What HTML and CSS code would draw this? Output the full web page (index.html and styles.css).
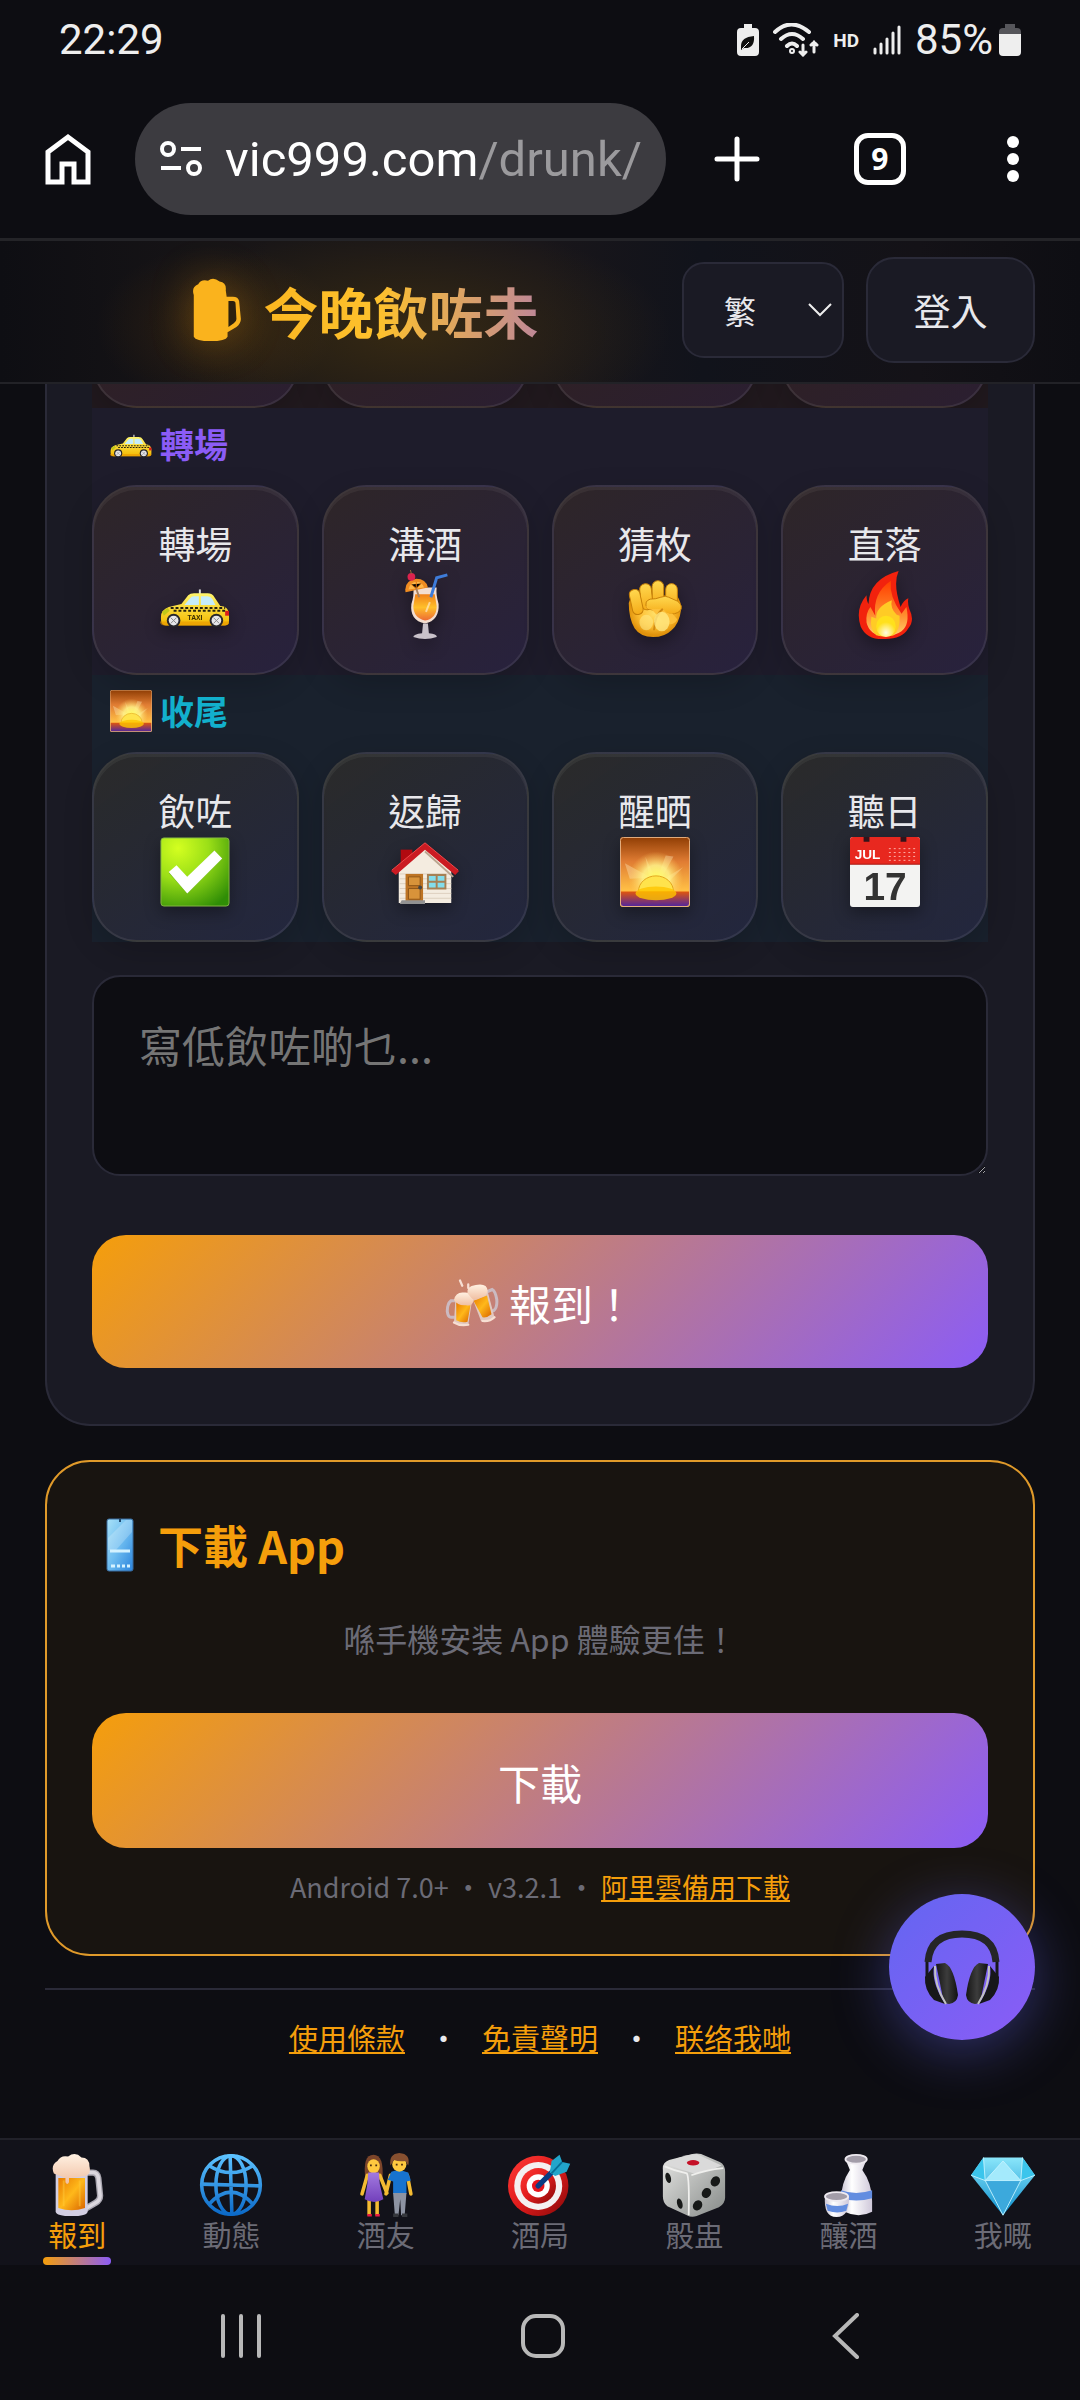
FILE: index.html
```
<!DOCTYPE html>
<html lang="zh-Hant">
<head>
    <meta charset="UTF-8">
    <meta name="viewport" content="width=device-width, initial-scale=1">
    <title>今晚飲咗未</title>
    <link rel="stylesheet" href="styles.css">
</head>
<body>
    <svg class="sprite" aria-hidden="true">
        <defs>
            <linearGradient id="g-beer" x1="0" x2="1" y1="0" y2="1"><stop offset="0" stop-color="#e87a00"/><stop offset=".5" stop-color="#ffb81a"/><stop offset="1" stop-color="#d96400"/></linearGradient>
            <linearGradient id="g-foam" x2="0" y2="1"><stop offset="0" stop-color="#fff1e2"/><stop offset="1" stop-color="#f0bfa2"/></linearGradient>
            <linearGradient id="g-taxi" x2="0" y2="1"><stop offset="0" stop-color="#fff56b"/><stop offset="1" stop-color="#f3b800"/></linearGradient>
            <linearGradient id="g-drink" x2="0" y2="1"><stop offset="0" stop-color="#f08018"/><stop offset=".5" stop-color="#ffc02a"/><stop offset="1" stop-color="#ed6a35"/></linearGradient>
            <radialGradient id="g-skin" cx=".5" cy=".45"><stop offset="0" stop-color="#ffe06a"/><stop offset=".6" stop-color="#fdbe32"/><stop offset="1" stop-color="#e0920c"/></radialGradient>
            <linearGradient id="g-finger" x2="0" y2="1"><stop offset="0" stop-color="#ffd84f"/><stop offset="1" stop-color="#f5ab18"/></linearGradient>
            <linearGradient id="g-fire" x2="0" y2="1"><stop offset="0" stop-color="#ff3d00"/><stop offset=".6" stop-color="#ff8a2c"/><stop offset="1" stop-color="#ffd06c"/></linearGradient>
            <radialGradient id="g-core" cy=".8"><stop offset="0" stop-color="#fffbe0"/><stop offset="1" stop-color="#ffe01c"/></radialGradient>
            <radialGradient id="g-green" cx=".25" cy=".15" r="1"><stop offset="0" stop-color="#d4ff20"/><stop offset=".45" stop-color="#9bdf17"/><stop offset="1" stop-color="#2f8d06"/></radialGradient>
            <linearGradient id="g-sky" x2="0" y2="1"><stop offset="0" stop-color="#8f3d04"/><stop offset=".35" stop-color="#e07c33"/><stop offset=".75" stop-color="#ffbe45"/></linearGradient>
            <radialGradient id="g-glow"><stop offset="0" stop-color="#ffff60"/><stop offset=".5" stop-color="#fff48a" stop-opacity=".85"/><stop offset="1" stop-color="#ffd060" stop-opacity="0"/></radialGradient>
            <linearGradient id="g-sea" x2="0" y2="1"><stop offset="0" stop-color="#e2560c"/><stop offset="1" stop-color="#54269a"/></linearGradient>
            <linearGradient id="g-phone" x2="1" y2="1"><stop offset="0" stop-color="#a9e2f8"/><stop offset=".5" stop-color="#6dbcf0"/><stop offset="1" stop-color="#2a83dc"/></linearGradient>
            <linearGradient id="g-globe" x2="0" y2="1"><stop offset="0" stop-color="#5cc2ff"/><stop offset="1" stop-color="#0c6ac8"/></linearGradient>
            <linearGradient id="g-target" x2="1" y2="1"><stop offset="0" stop-color="#ff3a36"/><stop offset=".5" stop-color="#e01c1c"/><stop offset="1" stop-color="#860808"/></linearGradient>
            <linearGradient id="g-die" x2="1" y2="1"><stop offset="0" stop-color="#e6e6e4"/><stop offset="1" stop-color="#868a88"/></linearGradient>
            <linearGradient id="g-china"><stop offset="0" stop-color="#c9c4d4"/><stop offset=".35" stop-color="#fff"/><stop offset="1" stop-color="#cfc8da"/></linearGradient>
            <linearGradient id="g-gem" x2="0" y2="1"><stop offset="0" stop-color="#8ae6fa"/><stop offset="1" stop-color="#0a8ccc"/></linearGradient>
            <linearGradient id="g-cup" x2="1"><stop offset="0" stop-color="#161616"/><stop offset=".5" stop-color="#3c3c3c"/><stop offset="1" stop-color="#111"/></linearGradient>
            <linearGradient id="g-dress" x2="0" y2="1"><stop offset="0" stop-color="#a37ae0"/><stop offset="1" stop-color="#7240bb"/></linearGradient>
        </defs>

        <symbol id="i-mug" viewBox="0 0 72 72">
            <path d="M44 22h10q5 0 6 6l2 20q0 5-5 8l-12 7" fill="none" stroke="#a9a6b0" stroke-width="7" stroke-linejoin="round"/>
            <path d="M44 22h10q5 0 6 6l2 20q0 5-5 8l-12 7" fill="none" stroke="#dcd8df" stroke-width="4" stroke-linejoin="round"/>
            <path d="M12 22h36v44q-1 5-18 5t-18-5z" fill="#d2cee2"/>
            <path d="M15 28h30v34q-15 5-30 0z" fill="url(#g-beer)"/>
            <path d="M21 31v29M39 31v29" stroke="#ffc93a" stroke-width="2" opacity=".5"/>
            <path d="M10 23Q6 14 14 9q4-7 12-5 8-6 15 1 9 0 9 10 2 8-4 11l-19 2v5q-2 4-4 0v-5z" fill="url(#g-foam)"/>
        </symbol>
        <symbol id="i-mug-flat" viewBox="0 0 58 72">
            <path d="M4 19Q1 10 9 7q3-6 11-4 6-5 13 1 8 1 7 10l1 7h7q6 0 7 5l2 20q0 5-5 9l-10 6v5q-2 5-19 5T4 66z" fill="#fab31d"/>
            <path d="M43 26h5q3 0 3 3l1 17q0 3-3 5l-6 4z" fill="#2c210e"/>
        </symbol>
        <symbol id="i-taxi" viewBox="0 0 72 72">
            <path d="M41 20v5" stroke="#ddd" stroke-width="2"/>
            <path d="M1 48q0-7 8-10l13-3 7-9q2-2 6-2h14q5 0 7 4l6 9q8 0 9 8v7q0 5-4 5H6q-5 0-5-6z" fill="url(#g-taxi)"/>
            <path d="M25 36l6-7q1-2 4-2h5v9zM42 27h7q3 0 5 3l3 6H42z" fill="#c5ecfa"/>
            <path d="M11 39h56M14 42h55" stroke="#25210f" stroke-width="2" stroke-dasharray="3 2"/>
            <path d="M2 43l6-4 2 3-6 5z" fill="#c2c719"/><path d="M67 42h4v5h-4z" fill="#d91c1c"/>
            <path d="M0 53h71v2q-1 2-5 2H5q-5 0-5-4z" fill="#e89600" opacity=".6"/>
            <circle cx="14" cy="52" r="7" fill="#25252a"/><circle cx="58" cy="52" r="7" fill="#25252a"/>
            <circle cx="14" cy="52" r="5" fill="#e6e6ea"/><circle cx="58" cy="52" r="5" fill="#e6e6ea"/>
            <path d="M11 49l6 6m0-6l-6 6M55 49l6 6m0-6l-6 6" stroke="#888"/>
        </symbol>
        <symbol id="i-drink" viewBox="0 0 72 72">
            <path d="M24 18h24q-1 7 2 17 1 17-14 20Q20 52 22 35q3-9 2-17z" fill="#f3ded0"/>
            <path d="M26 25h20l2 12q0 13-12 15-12-3-12-15z" fill="url(#g-drink)"/>
            <path d="M34 55h5l1 10q9 1 8 4-12 4-24 0 0-3 9-4z" fill="#c9c2ca"/>
            <path d="M16 23Q14 11 27 9q10 0 12 9z" fill="#ef8c21"/><path d="M19 20q1-7 8-8 6 0 8 6z" fill="#ffb748"/>
            <path d="M27 12v7m-5-4l5 4 5-5" stroke="#dc7210"/>
            <path d="M27 19l3 9" stroke="#a68160" stroke-width="2"/>
            <path d="M42 28l6-20 11-3" fill="none" stroke="#3e7cd9" stroke-width="3"/>
            <circle cx="22" cy="7" r="4" fill="#dc234d"/><path d="M22 4l-1-4" stroke="#9b6e39"/>
            <path d="M37 43l4-10" stroke="#fff" stroke-width="2" opacity=".5"/>
        </symbol>
        <symbol id="i-fist" viewBox="0 0 72 72">
            <path d="M9 34q2-8 14-9l36 2q4 6 4 13-2 15-10 22-7 7-19 7-13 0-19-9Q9 50 9 34z" fill="url(#g-skin)"/>
            <g fill="url(#g-finger)" stroke="#c67f08">
                <rect x="47" y="14" width="12" height="24" rx="6"/>
                <rect x="33" y="11" width="12" height="25" rx="6"/>
                <rect x="21" y="14" width="12" height="27" rx="6" transform="rotate(-6 27 27)"/>
                <rect x="11" y="20" width="11" height="26" rx="5" transform="rotate(-12 16 32)"/>
                <path d="M27 33q-2 7 6 8h11q5 6 12 4 8-2 7-8-1-3-4-5l-9-4q-3-2-8 0-5 2-11 2-3 1-4 3z"/>
            </g>
            <path d="M28 37q1 3 6 3h10q4 5 10 5l5 6q-4 7-12 4-9-8-14-14-6-1-6-4z" fill="#fdc03a"/>
            <path d="M44 40q-8 6-9 22" fill="none" stroke="#d18a12" stroke-width="2"/>
            <ellipse cx="43" cy="53" rx="8" ry="10" fill="#ffe884" opacity=".8"/><ellipse cx="27" cy="54" rx="7" ry="8" fill="#ffe884" opacity=".6"/>
        </symbol>
        <symbol id="i-fire" viewBox="0 0 72 72">
            <path d="M50 1q-6 13 2 37 3-7 8-9-1 5 1 11 6 12-1 20-6 11-24 11-19 1-25-13-6-18 6-32 0 6 2 9Q20 9 50 1z" fill="#f2220d"/>
            <path d="M42 11q-2 16 11 34l5-7q4 18-5 25-7 5-18 5-15-1-18-14-1-10 4-16l5 9q-3-23 16-36z" fill="url(#g-fire)"/>
            <path d="M43 31q-2 8 5 15l3 1q1 14-6 20-9 3-18 0-7-5-5-19l5 2q-1-12 16-19z" fill="#ffcb25"/>
            <ellipse cx="37" cy="58" rx="10" ry="11" fill="url(#g-core)"/>
        </symbol>
        <symbol id="i-check" viewBox="0 0 72 72">
            <rect x="1" y="1" width="70" height="70" rx="3" fill="url(#g-green)" stroke="#84b843"/>
            <path d="M9 37l8-7 11 12 28-28 8 8-36 36z" fill="#277708" opacity=".4"/>
            <path d="M9 36l8-7 11 12 28-27 8 8-36 36z" fill="#fff"/>
        </symbol>
        <symbol id="i-house" viewBox="0 0 72 72">
            <path d="M11 13h12v16H11z" fill="#b10a10"/>
            <path d="M9 34l27-25 27 25v34H9z" fill="#f4ece0"/>
            <path d="M10 38h53M10 43h53M10 48h53M10 53h53M10 58h53M10 63h53" stroke="#dccfbe"/>
            <path d="M36 15l29 26" stroke="#bba58f" stroke-width="2"/>
            <path d="M1 35L36 6l35 29-4 4-31-26L6 39z" fill="#cb1b22"/><path d="M2 34L36 6l34 28" fill="none" stroke="#f0494a"/>
            <path d="M16 38h18v28H16z" fill="#bd7424"/><path d="M19 41h12v9H19zM19 53h12v11H19z" fill="#d8933a" stroke="#8f5719"/>
            <circle cx="31" cy="52" r="2" fill="#444"/><path d="M12 65h24v4H10z" fill="#929292"/>
            <path d="M38 38h20v16H38z" fill="#a68054"/><path d="M40 40h7v5h-7zM49 40h7v5h-7zM40 47h7v5h-7zM49 47h7v5h-7z" fill="#83ddeb"/>
        </symbol>
        <symbol id="i-sunrise" viewBox="0 0 72 72">
            <rect width="72" height="72" rx="3" fill="url(#g-sky)"/>
            <path d="M32 42L5 27l5 16zM30 40L26 20l8 18zM40 38l7-19 8 1-12 22zM45 43l20-12-15 15z" fill="#fff1c5" opacity=".35"/>
            <circle cx="37" cy="43" r="28" fill="url(#g-glow)"/>
            <path d="M19 56a18 16 0 0 1 36 0z" fill="#ffe34c" stroke="#e3a41d"/>
            <path d="M1 56h70v15H1z" fill="url(#g-sea)"/>
            <ellipse cx="37" cy="58" rx="21" ry="7" fill="#ffc400" opacity=".8"/>
            <rect x=".5" y=".5" width="71" height="71" rx="3" fill="none" stroke="#e5b181"/>
        </symbol>
        <symbol id="i-calendar" viewBox="0 0 72 72">
            <rect width="72" height="72" rx="3" fill="#f3f3f2"/><path d="M0 28V3q0-3 3-3h66q3 0 3 3v25z" fill="#e8281f"/>
            <path d="M0 28h72" stroke="#a61812"/><path d="M14 0h6v5h-6zM52 0h6v5h-6z" fill="#33131a"/>
            <path d="M40 12h30M40 16h30M40 20h30M40 24h30" stroke="#ffb2aa" stroke-dasharray="2 3"/>
        </symbol>
        <symbol id="i-cheers" viewBox="0 0 72 64">
            <path d="M14 29l-6 0q-5 4-5 14 1 8 5 8h5M56 17l7-3q4 2 6 13 1 11-4 15l-6 1" fill="none" stroke="#cbbac1" stroke-width="4"/>
            <path d="M14 24l22 5-5 32q-9 4-19-3z" fill="#e1c8c0"/><path d="M37 27l20-10 9 34q-7 7-18 5z" fill="#e1c8c0"/>
            <path d="M15 31l19 4-4 22q-8 2-15-2z" fill="url(#g-beer)"/><path d="M38 29l18-7 6 25q-6 5-12 4z" fill="url(#g-beer)"/>
            <path d="M12 28q2-11 13-10 13-1 13 11-2 8-10 6-11 1-16-7z" fill="url(#g-foam)"/>
            <path d="M30 19q-2-9 11-11 15-3 16 8-1 7-10 9-8 5-12 0z" fill="url(#g-foam)"/>
            <path d="M23 9l-3-7M31 12V7M12 58q8 5 19 3M50 56q10 1 16-5" stroke="#f7dfd3" stroke-width="3" stroke-linecap="round" fill="none"/>
        </symbol>
        <symbol id="i-phone" viewBox="0 0 28 54">
            <rect x="1" y="1" width="26" height="52" rx="2" fill="url(#g-phone)" stroke="#396b9d"/>
            <path d="M20 2h6v12L10 32H2V20z" fill="#fff" opacity=".22"/>
            <path d="M4 33h20M5 48h4m2 0h3m2 0h3m2 0h3" stroke="#d4f2ff" stroke-width="3"/><path d="M14 1v3" stroke="#234b70" stroke-width="2"/>
        </symbol>
        <symbol id="i-globe" viewBox="0 0 72 72">
            <g fill="none" stroke="url(#g-globe)" stroke-width="4"><circle cx="36" cy="36" r="33"/><ellipse cx="36" cy="36" rx="17" ry="33"/><path d="M35 3l2 66M3 35l66 2M11 14q25 16 50 0M11 58q25-28 50 0"/></g>
        </symbol>
        <symbol id="i-couple" viewBox="0 0 72 72">
            <path d="M13 30Q9 2 22 2q12 0 10 27l-5 2H17z" fill="#7c452a"/><ellipse cx="22" cy="15" rx="7" ry="8" fill="#ffc93f"/>
            <path d="M15 25L9 46M29 25l8 20M17 50v19M26 50v19M41 25l-5 21M60 25l4 21" stroke="#f4bb32" stroke-width="4" stroke-linecap="round"/>
            <path d="M16 22h12l1 13 4 17q-10 6-21 0l3-17z" fill="url(#g-dress)"/>
            <path d="M42 21q9-3 19 1l3 9-5 1v14H44V32l-6-2z" fill="#1773cf"/>
            <path d="M44 45h15l-2 25h-4l-1-18-2 18h-4z" fill="#8d93a2"/>
            <ellipse cx="51" cy="13" rx="8" ry="8" fill="#ffc93f"/><path d="M41 14q-2-13 10-14 13 1 10 14l-3-5q-8 1-13-1z" fill="#875030"/>
            <path d="M18 14h2m4 0h2m21-1h2m4 0h2" stroke="#4d2d11" stroke-width="2"/><path d="M15 70h5m4 0h5" stroke="#e91b42" stroke-width="3"/><path d="M44 70h6m4 0h6" stroke="#35373c" stroke-width="4"/>
        </symbol>
        <symbol id="i-target" viewBox="0 0 72 72">
            <circle cx="34" cy="37" r="34" fill="url(#g-target)"/><circle cx="34" cy="37" r="27" fill="#f4f0f0"/><circle cx="34" cy="37" r="20" fill="url(#g-target)"/><circle cx="34" cy="37" r="13" fill="#fff"/><circle cx="34" cy="37" r="7" fill="#e6141c"/>
            <path d="M34 37l18-18" stroke="#0b3c83" stroke-width="6" stroke-linecap="round"/><path d="M47 22l2-13 9-7 3 8 9 2-4 9-13 5z" fill="#22a5ca"/><path d="M49 23L61 10" stroke="#076e95" stroke-width="2"/>
        </symbol>
        <symbol id="i-die" viewBox="0 0 72 72">
            <path d="M1 19Q0 11 8 8L34 1q5-1 10 0l21 9q6 3 6 11v29q0 7-7 11l-25 10q-6 2-11-1L6 60q-5-4-5-11z" fill="url(#g-die)"/>
            <path d="M5 13Q18 3 39 1l28 13q-13 6-31 9-14-4-31-10z" fill="#dadada"/><path d="M3 15q11 5 25 8 3 5 2 47M69 17q-20 2-36 8" fill="none" stroke="#efefed" stroke-width="2"/>
            <ellipse cx="35" cy="11" rx="7" ry="3" fill="#c51127"/><g fill="#171918"><ellipse cx="7" cy="28" rx="3" ry="6" transform="rotate(-15 7 28)"/><ellipse cx="20" cy="57" rx="3" ry="6" transform="rotate(-15 20 57)"/><ellipse cx="60" cy="32" rx="5" ry="6" transform="rotate(35 60 32)"/><ellipse cx="50" cy="45" rx="5" ry="6" transform="rotate(35 50 45)"/><ellipse cx="40" cy="59" rx="5" ry="6" transform="rotate(35 40 59)"/></g>
        </symbol>
        <symbol id="i-sake" viewBox="0 0 72 72">
            <path d="M32 7h24l-5 12q11 15 11 35v12q-15 8-31 0l-4-9q-1-22 10-38z" fill="url(#g-china)"/><path d="M27 42q17 6 35 0v9q-18 5-35 0z" fill="#638de0"/><ellipse cx="44" cy="7" rx="12" ry="5" fill="#a39da9" stroke="#eeeaf0" stroke-width="2"/>
            <path d="M9 49h27q1 23-14 23T9 49z" fill="url(#g-china)"/><path d="M10 57q13 5 25 0l-2 8q-10 4-21 0z" fill="#638de0"/><ellipse cx="22" cy="49" rx="13" ry="5" fill="#a39da9" stroke="#eeeaf0" stroke-width="2"/>
        </symbol>
        <symbol id="i-gem" viewBox="0 0 72 72">
            <path d="M14 5h44l14 20-36 45L0 25z" fill="url(#g-gem)"/><path d="M14 5l2 26L0 25zM58 5l-2 26 16-6z" fill="#3bc5ec"/><path d="M16 31L36 70l20-39z" fill="#3ca9dc"/><path d="M16 31L36 9l20 22z" fill="#a4eafc"/><path d="M0 25l16 6h40l16-6M14 5l2 26 20 39 20-39 2-26M16 31L36 9l20 22" fill="none" stroke="#c5f4ff"/>
        </symbol>
        <symbol id="i-headphones" viewBox="0 0 76 76">
            <path d="M3 48V33Q5 4 38 4t35 29v15" fill="none" stroke="#17171a" stroke-width="3"/><path d="M4 33Q6 5 38 5t34 28" fill="none" stroke="#252527" stroke-width="7"/>
            <path d="M12 35l9-1q9 4 13 32-1 8-9 9l-5-1z" fill="url(#g-cup)"/><path d="M64 35l-9-1q-9 4-13 32 1 8 9 9l5-1z" fill="url(#g-cup)"/>
            <path d="M10 37q-3 16 11 38l-11-4Q0 61 1 48zM66 37q3 16-11 38l11-4q10-10 9-23z" fill="#171719"/><path d="M11 37q-1 19 11 38M65 37q1 19-11 38" stroke="#c2c2c2" stroke-width="2" fill="none"/>
        </symbol>
    </svg>

    <div class="status-bar">
        <span>22:29</span>
        <div class="status-icons">
            <svg width="22" height="32" viewBox="0 0 22 32"><path d="M7 0h8v4h3q4 0 4 4v20q0 4-4 4H4q-4 0-4-4V8q0-4 4-4h3z" fill="#eee"/><path d="M4 22q0-9 13-10 1 13-10 12l-3 2z" fill="#111"/><path d="M5 25l7-7" stroke="#eee"/></svg>
            <svg width="46" height="34" viewBox="0 0 46 34" fill="none" stroke="#eee" stroke-width="4" stroke-linecap="round"><path d="M2 9q16-15 34 0M8 16q11-10 22 0M14 23q5-5 10 0"/><circle cx="19" cy="28" r="1"/><path d="M30 22v10m-3-3l3 3 3-3M41 29V19m-3 3l3-3 3 3" stroke-width="3"/></svg>
            <b class="hd">HD</b>
            <svg width="28" height="30" viewBox="0 0 28 30" stroke="#eee" stroke-width="3" stroke-linecap="round"><path d="M2 24v4M8 19v9M14 14v14M20 8v20M26 2v26"/></svg>
            <span class="battery">85%<svg width="22" height="32" viewBox="0 0 22 32"><path d="M6 0h10v4h2q4 0 4 4v2H0V8q0-4 4-4h2z" fill="#55555a"/><path d="M0 10h22v18q0 4-4 4H4q-4 0-4-4z" fill="#eee"/></svg></span>
        </div>
    </div>

    <div class="browser-bar">
        <button class="tool" aria-label="主頁"><svg width="46" height="52" viewBox="0 0 46 52"><path d="M3 19L23 4l20 15v30H29V31H17v18H3z" fill="none" stroke="#fff" stroke-width="5"/></svg></button>
        <div class="address">
            <svg width="44" height="38" viewBox="0 0 44 38" fill="none" stroke="#fff" stroke-width="4"><circle cx="9" cy="9" r="6"/><path d="M22 9h20M2 28h20"/><circle cx="35" cy="28" r="6"/></svg>
            <span>vic999.com<span class="path">/drunk/</span></span>
        </div>
        <button class="tool" aria-label="新分頁"><svg width="46" height="46" viewBox="0 0 46 46"><path d="M23 3v40M3 23h40" stroke="#fff" stroke-width="5" stroke-linecap="round"/></svg></button>
        <button class="tool"><span class="tab-count">9</span></button>
        <button class="tool tool-last" aria-label="選單"><svg width="12" height="46" viewBox="0 0 12 46" fill="#fff"><circle cx="6" cy="6" r="6"/><circle cx="6" cy="23" r="6"/><circle cx="6" cy="40" r="6"/></svg></button>
    </div>

    <header class="header">
        <h1 class="logo"><svg width="52" height="64"><use href="#i-mug-flat"/></svg><span>今晚飲咗未</span></h1>
        <div class="lang">
            <select aria-label="語言"><option>繁</option></select>
            <svg width="26" height="16" viewBox="0 0 26 16"><path d="M2 2l11 11L24 2" fill="none" stroke="#eee" stroke-width="2"/></svg>
        </div>
        <button class="login">登入</button>
    </header>

    <main class="main">
        <section class="card checkin">
            <div class="tiles tiles-prev" aria-hidden="true"><div class="tile"></div><div class="tile"></div><div class="tile"></div><div class="tile"></div></div>
            <div class="group group-move">
                <h2 class="group-title"><svg width="42" height="42"><use href="#i-taxi"/></svg>轉場</h2>
                <div class="tiles">
                    <button class="tile">轉場<svg viewBox="0 0 72 72"><use href="#i-taxi"/><text x="36" y="51" font-size="7" text-anchor="middle" fill="#382c00">TAXI</text></svg></button>
                    <button class="tile">溝酒<svg><use href="#i-drink"/></svg></button>
                    <button class="tile">猜枚<svg><use href="#i-fist"/></svg></button>
                    <button class="tile">直落<svg><use href="#i-fire"/></svg></button>
                </div>
            </div>
            <div class="group group-end">
                <h2 class="group-title"><svg width="42" height="42"><use href="#i-sunrise"/></svg>收尾</h2>
                <div class="tiles">
                    <button class="tile">飲咗<svg><use href="#i-check"/></svg></button>
                    <button class="tile">返歸<svg><use href="#i-house"/></svg></button>
                    <button class="tile">醒晒<svg><use href="#i-sunrise"/></svg></button>
                    <button class="tile">聽日<svg viewBox="0 0 72 72"><use href="#i-calendar"/><text x="18" y="23" font-size="14" text-anchor="middle" fill="#fff">JUL</text><text x="36" y="65" font-size="40" text-anchor="middle" fill="#333">17</text></svg></button>
                </div>
            </div>
            <textarea class="note" aria-label="備註" placeholder="寫低飲咗啲乜..."></textarea>
            <button class="btn"><svg width="54" height="48"><use href="#i-cheers"/></svg>報到！</button>
        </section>

        <section class="card download">
            <h2 class="download-title"><svg width="28" height="54"><use href="#i-phone"/></svg>下載 App</h2>
            <p class="download-desc">喺手機安装 App 體驗更佳！</p>
            <a class="btn btn-download" href="#">下載</a>
            <p class="download-meta">Android 7.0+ • v3.2.1 • <a href="#">阿里雲備用下載</a></p>
        </section>

        <footer class="footer">
            <a href="#">使用條款</a><span>•</span><a href="#">免責聲明</a><span>•</span><a href="#">联络我哋</a>
        </footer>
        <button class="fab" aria-label="客服"><svg width="76" height="76"><use href="#i-headphones"/></svg></button>
    </main>

    <nav class="tabs">
        <a class="tab active" href="#"><svg><use href="#i-mug"/></svg>報到</a>
        <a class="tab" href="#"><svg><use href="#i-globe"/></svg>動態</a>
        <a class="tab" href="#"><svg><use href="#i-couple"/></svg>酒友</a>
        <a class="tab" href="#"><svg><use href="#i-target"/></svg>酒局</a>
        <a class="tab" href="#"><svg><use href="#i-die"/></svg>骰盅</a>
        <a class="tab" href="#"><svg><use href="#i-sake"/></svg>釀酒</a>
        <a class="tab" href="#"><svg><use href="#i-gem"/></svg>我嘅</a>
    </nav>

    <div class="system-bar">
        <button aria-label="最近"><svg width="46" height="46" viewBox="0 0 46 46"><path d="M5 3v40M23 3v40M41 3v40" stroke="#b8b8b8" stroke-width="4" stroke-linecap="round"/></svg></button>
        <button aria-label="主畫面"><svg width="46" height="46" viewBox="0 0 46 46"><rect x="3" y="3" width="40" height="40" rx="13" fill="none" stroke="#b8b8b8" stroke-width="4"/></svg></button>
        <button aria-label="返回"><svg width="46" height="46" viewBox="0 0 46 46"><path d="M35 2L13 23l22 21" fill="none" stroke="#b8b8b8" stroke-width="4" stroke-linecap="round"/></svg></button>
    </div>
</body>
</html>
```
FILE: styles.css
```
*{
    box-sizing:border-box;
}
body{
    margin:0;
    min-height:100vh;
    display:flex;
    flex-direction:column;
    background:#0d0d12;
    color:#e8e8ec;
    font-family:"Noto Sans CJK SC","Noto Sans CJK TC",sans-serif;
}
button,select,textarea{
    margin:0;
    padding:0;
    border:0;
    background:none;
    color:inherit;
    font-family:inherit;
}
h1,h2,p{
    margin:0;
}
svg{
    display:block;
    flex:none;
}
svg text{
    font-family:"Liberation Sans",sans-serif;
    font-weight:bold;
}
.sprite{
    position:absolute;
    width:0;
    height:0;
}

/* status bar */
.status-bar{
    height:80px;
    padding:0 59px;
    display:flex;
    justify-content:space-between;
    align-items:center;
    font:42px/1 Roboto,sans-serif;
    color:#eee;
}
.status-icons,.battery{
    display:flex;
    align-items:center;
}
.status-icons{
    gap:14px;
}
.battery{
    gap:6px;
}
.hd{
    font-size:19px;
}

/* browser toolbar */
.browser-bar{
    height:158px;
    padding:0 45px;
    display:flex;
    align-items:center;
}
.tool{
    flex:1;
    height:112px;
    display:flex;
    align-items:center;
    justify-content:center;
    color:#fff;
}
.tool:first-child{
    flex:none;
    margin-right:44px;
}
.tool-last{
    flex:0 0 84px;
    justify-content:flex-end;
    padding-right:16px;
}
.address{
    flex:0 0 auto;
    height:112px;
    padding:0 24px;
    display:flex;
    align-items:center;
    gap:22px;
    border-radius:56px;
    background:#3c3b40;
    color:#fff;
    font:49px/1 Roboto,sans-serif;
}
.path{
    color:#9b9a9d;
}
.tab-count{
    width:52px;
    height:52px;
    border:5px solid #fff;
    border-radius:14px;
    font:bold 30px/42px "Noto Sans",sans-serif;
    text-align:center;
}

/* site header */
.header{
    height:146px;
    padding:0 45px 4px;
    display:flex;
    align-items:center;
    gap:22px;
    border-top:3px solid #242428;
    border-bottom:2px solid #222227;
    background:
        radial-gradient(ellipse 260px 110px at 38% 65%,rgba(150,105,0,.23),transparent),
        radial-gradient(ellipse 120px 80px at 20% 60%,rgba(150,85,0,.18),transparent),
        linear-gradient(90deg,#0e0e13,#191617 25%,#19161a 50%,#11131b 65%,#141217 85%,#0e0e13);
}
.logo{
    flex:1;
    padding-left:24px;
    display:flex;
    align-items:center;
    justify-content:center;
    gap:21px;
    font-size:55px;
    line-height:80px;
}
.logo span{
    color:transparent;
    background:linear-gradient(90deg,#fbb721,#fdc12d 42%,#be8798);
    -webkit-background-clip:text;
    background-clip:text;
}
.logo svg{
    filter:drop-shadow(0 0 20px rgba(245,158,11,.3));
}
.lang{
    position:relative;
    width:162px;
}
.lang select{
    width:100%;
    height:96px;
    padding-left:40px;
    border:2px solid #2a2a38;
    border-radius:22px;
    background:#1a1a24;
    font-size:32px;
    appearance:none;
}
.lang svg{
    position:absolute;
    right:11px;
    top:40px;
    pointer-events:none;
}
.login{
    width:169px;
    height:106px;
    border:2px solid #2a2a38;
    border-radius:28px;
    background:#1a1a24;
    font-size:37px;
}

/* content */
.main{
    position:relative;
    flex:1;
    padding:0 45px;
    overflow:hidden;
}
.card{
    padding:45px;
    border:2px solid #2a2a38;
    border-radius:45px;
    background:#1a1a24;
}
.checkin{
    padding-top:0;
    padding-bottom:56px;
    border-top:0;
    border-radius:0 0 45px 45px;
}
.tiles{
    display:grid;
    grid-template-columns:repeat(4,1fr);
    gap:23px;
}
/* only the bottom edge of this row shows under the header */
.tiles-prev{
    height:24px;
    align-content:end;
    overflow:hidden;
    background:#21191e;
}
.tile{
    height:190px;
    display:flex;
    flex-direction:column;
    align-items:center;
    padding-top:29px;
    border:2px solid rgba(255,255,255,.08);
    border-radius:45px;
    background:linear-gradient(145deg,rgba(245,158,11,.08),rgba(139,92,246,.09));
    box-shadow:0 10px 30px rgba(0,0,0,.16),inset 0 3px 0 rgba(255,255,255,.05);
    font-size:37px;
    line-height:54px;
}
.tile svg{
    width:70px;
    height:70px;
    filter:drop-shadow(0 6px 8px rgba(0,0,0,.35));
}
.group-title{
    height:77px;
    padding:0 0 6px 18px;
    display:flex;
    align-items:center;
    gap:8px;
    font-size:34px;
}
.group-move{
    background:#1e1c2b;
}
.group-move .group-title{
    color:#8b5cf6;
}
.group-end{
    background:#19212d;
}
.group-end .group-title{
    color:#12b0cc;
}
.note{
    display:block;
    width:100%;
    height:201px;
    margin:33px 0 59px;
    padding:37px 45px;
    border:2px solid #2a2a38;
    border-radius:28px;
    background:#0d0d12;
    font-size:43px;
    line-height:60px;
    resize:vertical;
}
.note::placeholder{
    color:#757575;
}
.btn{
    width:100%;
    height:133px;
    padding-top:2px;
    display:flex;
    align-items:center;
    justify-content:center;
    gap:10px;
    border-radius:34px;
    background:linear-gradient(135deg,#f59e0b,#8b5cf6);
    color:#fff;
    font-size:42px;
    text-decoration:none;
}
.download{
    margin-top:34px;
    border-color:#e09a2a;
    background:#181410;
}
.download-title{
    padding-left:14px;
    display:flex;
    align-items:center;
    gap:24px;
    color:#f59e0b;
    font-size:45px;
    line-height:76px;
}
.download-desc{
    margin:26px 0 46px;
    color:#6b6b76;
    font-size:32px;
    line-height:58px;
    text-align:center;
}
.btn-download{
    height:135px;
}
.download-meta{
    margin-top:17px;
    color:#6b6b76;
    font-size:27px;
    line-height:44px;
    text-align:center;
}
.download-meta a,.footer a{
    color:#f59e0b;
}
.footer{
    margin-top:32px;
    padding:24px 0;
    display:flex;
    justify-content:center;
    gap:24px;
    border-top:2px solid #2a2a38;
    font-size:29px;
    line-height:46px;
}
.fab{
    position:absolute;
    right:45px;
    bottom:98px;
    width:146px;
    height:146px;
    display:flex;
    align-items:center;
    justify-content:center;
    border-radius:50%;
    background:linear-gradient(135deg,#6366f1,#8b5cf6);
    box-shadow:0 11px 56px rgba(99,102,241,.4);
}

/* bottom navigation */
.tabs{
    height:127px;
    display:flex;
    border-top:2px solid #212129;
    background:#12121a;
}
.tab{
    position:relative;
    flex:1;
    padding-top:13px;
    display:flex;
    flex-direction:column;
    align-items:center;
    color:#6b6b76;
    font-size:29px;
    line-height:34px;
    text-decoration:none;
}
.tab svg{
    width:64px;
    height:64px;
}
.tab.active{
    color:#f59e0b;
}
.tab.active::after{
    content:"";
    position:absolute;
    bottom:0;
    width:68px;
    height:8px;
    border-radius:4px;
    background:linear-gradient(90deg,#f59e0b,#8b5cf6);
}
.system-bar{
    height:135px;
    padding:6px 84px 0 90px;
    display:flex;
    align-items:center;
}
.system-bar button{
    flex:1;
    display:flex;
    justify-content:center;
}
```
